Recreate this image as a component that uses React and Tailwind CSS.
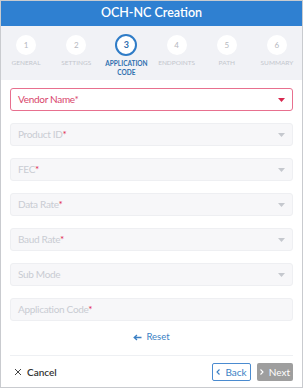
import React from "react";

const steps = [
  { n: 1, label: "GENERAL" },
  { n: 2, label: "SETTINGS" },
  { n: 3, label: "APPLICATION CODE", active: true },
  { n: 4, label: "ENDPOINTS" },
  { n: 5, label: "PATH" },
  { n: 6, label: "SUMMARY" },
];

const fields = [
  { label: "Product ID", req: true, arrow: true },
  { label: "FEC", req: true, arrow: true },
  { label: "Data Rate", req: true, arrow: true },
  { label: "Baud Rate", req: true, arrow: true },
  { label: "Sub Mode", req: false, arrow: true },
  { label: "Application Code", req: true, arrow: false },
];

function Caret({ color }) {
  return (
    <svg width="7" height="4" viewBox="0 0 7 4" className="shrink-0">
      <path d="M0 0 L7 0 L3.5 4 Z" fill={color} />
    </svg>
  );
}

export default function App() {
  return (
    <div
      className="w-[303px] h-[388px] border border-[#c9cbcf] bg-white flex flex-col overflow-hidden"
      style={{ fontFamily: "Lato, 'Noto Sans', sans-serif" }}
    >
      <div className="h-[25px] bg-[#2f80d1] flex items-center justify-center text-white text-[12.5px] font-semibold shrink-0">
        OCH-NC Creation
      </div>
      <div className="h-[54px] bg-[#f1f2f6] flex shrink-0 pt-[9px]">
        {steps.map((s) => (
          <div key={s.n} className="flex-1 flex flex-col items-center">
            {s.active ? (
              <div className="w-[22px] h-[22px] -mt-px rounded-full border-2 border-[#2f7cc7] bg-white flex items-center justify-center text-[9px] font-bold text-[#2f6fae]">
                {s.n}
              </div>
            ) : (
              <div className="w-[20px] h-[20px] rounded-full bg-white flex items-center justify-center text-[8px] text-[#b5b8c0]">
                {s.n}
              </div>
            )}
            <div
              className={
                "mt-[3px] text-[6.5px] leading-[9px] text-center uppercase " +
                (s.active
                  ? "text-[#2f6fae] font-bold w-[44px]"
                  : "text-[#c3c6cd]")
              }
            >
              {s.label}
            </div>
          </div>
        ))}
      </div>
      <div className="flex flex-col px-[9px] pt-[8px] gap-[12px]">
        <div className="h-[23px] border border-[#e8708f] rounded-[3px] flex items-center justify-between px-[7px] bg-white">
          <span className="text-[10px] tracking-[-0.3px] text-[#d8456b]">Vendor Name*</span>
          <Caret color="#d8284f" />
        </div>
        {fields.map((f) => (
          <div
            key={f.label}
            className="h-[23px] border border-[#eeeff2] bg-[#f7f7f9] rounded-[3px] flex items-center justify-between px-[7px]"
          >
            <span className="text-[10px] tracking-[-0.3px] text-[#c9ccd3]">
              {f.label}
              {f.req && <span className="text-[#e0284f]">*</span>}
            </span>
            {f.arrow && <Caret color="#c5c8ce" />}
          </div>
        ))}
      </div>
      <div className="flex justify-center items-center gap-[4px] mt-[9px] text-[#3a7fc4] text-[9.5px]">
        <svg width="9" height="7" viewBox="0 0 9 7">
          <path d="M8.5 3.5 H1.5 M4 1 L1.2 3.5 L4 6" stroke="#3a7fc4" strokeWidth="1.3" fill="none" />
        </svg>
        <span>Reset</span>
      </div>
      <div className="mx-[9px] mt-[11px] border-t border-[#eef0f3]"></div>
      <div className="flex items-center justify-between pl-[13px] pr-[9px] mt-[7px]">
        <div className="flex items-center gap-[5px] text-[10px] text-[#333] font-semibold">
          <svg width="8" height="8" viewBox="0 0 8 8">
            <path d="M1 1 L7 7 M7 1 L1 7" stroke="#444" strokeWidth="1" />
          </svg>
          <span>Cancel</span>
        </div>
        <div className="flex items-center gap-[6px]">
          <div className="w-[39px] h-[18px] border border-[#4a8bd0] rounded-[2px] flex items-center justify-center gap-[5px] text-[10px] text-[#3a7fc4] bg-white">
            <svg width="4" height="6" viewBox="0 0 4 6">
              <path d="M3.5 0.5 L1 3 L3.5 5.5" stroke="#3a7fc4" strokeWidth="1.1" fill="none" />
            </svg>
            <span>Back</span>
          </div>
          <div className="w-[36px] h-[18px] bg-[#9e9e9e] rounded-[2px] flex items-center justify-center gap-[5px] text-[10px] text-white">
            <svg width="4" height="6" viewBox="0 0 4 6">
              <path d="M0.5 0.5 L3 3 L0.5 5.5" stroke="#fff" strokeWidth="1.1" fill="none" />
            </svg>
            <span>Next</span>
          </div>
        </div>
      </div>
    </div>
  );
}
